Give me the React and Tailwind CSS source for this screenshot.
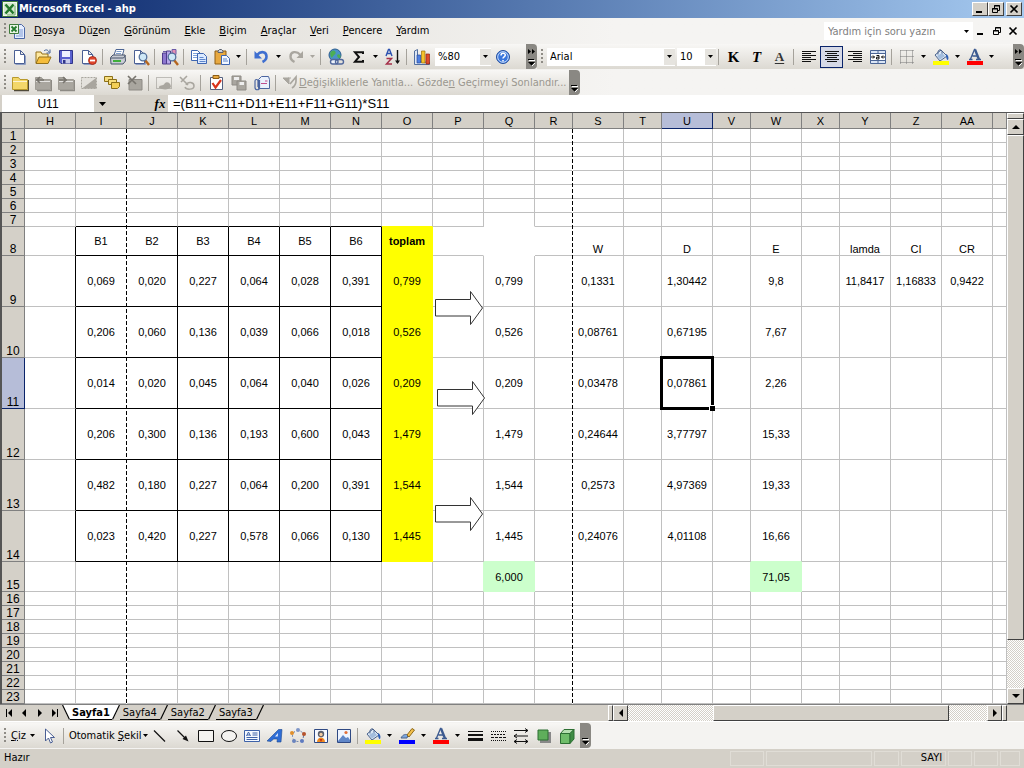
import React, { useState } from "react";
import clsx from "clsx";

const UI_FONT = "font-['DejaVu_Sans_Condensed','Noto_Sans',sans-serif]";
const CELL_FONT = "font-['Liberation_Sans',Arial,sans-serif]";
const RAISED =
  "bg-[#d4d0c8] border border-t-white border-l-white border-r-[#404040] border-b-[#404040]";
const TRACK =
  "bg-[repeating-conic-gradient(#ffffff_0_25%,#d4d0c8_0_50%)] bg-[length:2px_2px]";

/* ---------- icons ---------- */

const Svg = ({ children, w = 18, h = 18 }) => (
  <svg
    width={w}
    height={h}
    viewBox={`0 0 ${w} ${h}`}
    fill="none"
    className="shrink-0"
    aria-hidden="true"
  >
    {children}
  </svg>
);

const Page = ({ x = 3.5, y = 2.5, w = 10, h = 13 }) => (
  <g>
    <path d={`M${x + 1} ${y + h + 1}h${w}V${y + 5}`} stroke="#8f9fc4" />
    <path
      d={`M${x} ${y}h${w - 4}l4 4v${h - 4}h${-w}z M${x + w - 4} ${y}v4h4`}
      fill="#fff"
      stroke="#4a5f94"
    />
  </g>
);

const Glass = ({ x = 11, y = 8 }) => (
  <g>
    <path d={`M${x + 2} ${y + 3}l4 5`} stroke="#b5651d" strokeWidth="2.4" />
    <circle cx={x} cy={y} r="3.8" fill="#cfe8f6" stroke="#54719c" strokeWidth="1.3" />
  </g>
);

const Folder = ({ body = "#f3d76a", line = "#b8992c", shade = "#4f4a38" }) => (
  <g>
    <path d="M3 16.5h14.5V6" stroke={shade} strokeWidth="1.4" />
    <path d="M1.5 3.5h6l1.5 2h7.500v10h-15z" fill={body} stroke={line} />
    <path d="M2 7.5h14" stroke="#fff" strokeOpacity=".7" />
  </g>
);

const Bucket = () => (
  <g>
    <path d="M3 7l6-5 6 6-7 5z" fill="#dbe8f6" stroke="#4a628c" />
    <path d="M6 6.5c-1-5 3-6 4-3v4" stroke="#4a628c" />
    <path d="M14 6c2.5 1 3 4 2 6-1.5 0-2-2.500-2-6z" fill="#2d5fb5" />
    <path d="M5 8l5-3 3 3-5 3.5z" fill="#a3bddd" />
    <rect x="1" y="13" width="16" height="4" fill="#ff0" />
  </g>
);

const G = "#a9a69f";
const K = "#111";

const ICONS = {
  blank: <Page />,
  open: (
    <g>
      <path d="M2 15V4h5l1 2h6v3" fill="#ffe9a0" stroke="#93701a" />
      <path d="M2 15.5L5 9h12l-3 6.5z" fill="#f5bd3c" stroke="#93701a" />
      <path d="M10 3c2-2 4-1 5 1m1-2.5V5h-3.5" stroke="#3f5f96" />
    </g>
  ),
  save: (
    <g>
      <path d="M2.5 2.5h13v13H4l-1.500-1.500z" fill="#5b62cf" stroke="#30358a" />
      <path d="M5 3h8v6H5z" fill="#eef2ff" />
      <path d="M5 11h8v4.5H5z" fill="#c9cdec" />
      <path d="M6 12h2.5v3.5H6z" fill="#30358a" />
    </g>
  ),
  permission: (
    <g>
      <Page x={2.5} />
      <circle cx="12.5" cy="12.5" r="4" fill="#e0452c" stroke="#9d2412" strokeWidth=".8" />
      <path d="M10 12.5h5" stroke="#fff" strokeWidth="1.8" />
    </g>
  ),
  print: (
    <g>
      <path d="M5 7l2-5.5h8L13.5 7" fill="#fff" stroke="#4c6493" />
      <path d="M7.5 3.5h5M7 5.5h5" stroke="#7c9cc9" />
      <path d="M1.5 9.5L4 7h12l.5 6-2.500 3H2z" fill="#c8ccd4" stroke="#47536b" />
      <path d="M2 10h12.5l2-2.500" stroke="#47536b" />
      <path d="M4 13h8" stroke="#3fae3b" strokeWidth="2" />
    </g>
  ),
  preview: (
    <g>
      <Page x={2.5} />
      <Glass x={11} y={9} />
    </g>
  ),
  research: (
    <g>
      <path d="M1.5 5h4v11h-4z" fill="#8d76cf" stroke="#4d3c8c" />
      <path d="M5.5 3h4v13h-4z" fill="#b9a8ea" stroke="#4d3c8c" />
      <path d="M2 3.5h3M11 1.5h4v5h-4z" fill="#e58fb3" stroke="#6b5aa8" />
      <Glass x={11} y={9} />
    </g>
  ),
  copy: (
    <g>
      <path d="M1.5 2.5h6l2.5 2.5v7.5H1.5z" fill="#fff" stroke="#3e66b1" />
      <path d="M3 5.500h5M3 7.500h5M3 9.500h4" stroke="#7ea2dd" />
      <path d="M7.500 5.500h6l3 3v7h-9z" fill="#dceaff" stroke="#3e66b1" />
      <path d="M9.5 9.500h4M9.5 11.500h6M9.5 13.500h6" stroke="#5d86cc" />
    </g>
  ),
  paste: (
    <g>
      <path d="M2 3h11v13H2z" fill="#e8a940" stroke="#8d5d13" />
      <path d="M5 4.500V3l1.500-1.500h2L10 3v1.500z" fill="#ccd2de" stroke="#59606e" />
      <path d="M8.5 7.500h5l3 3v6h-8z" fill="#f2f7ff" stroke="#3e66b1" />
      <path d="M10 11h4M10 13h5" stroke="#5d86cc" />
    </g>
  ),
  undo: (
    <g>
      <path d="M4 7c4-4.500 9.500-3.500 9.500 1.500 0 3-2 4.500-4 5.500" stroke="#3f6fd0" strokeWidth="2.6" />
      <path d="M1.5 3v7.500H9z" fill="#3f6fd0" />
    </g>
  ),
  redo: (
    <g>
      <path d="M13.5 7c-4-4.500-10-3.500-10 1.500 0 3 2 4.500 4 5.500" stroke={G} strokeWidth="2.4" />
      <path d="M16 3v7H9.500z" fill={G} />
    </g>
  ),
  link: (
    <g>
      <circle cx="8" cy="7" r="6" fill="#4a93c9" stroke="#2c5d8f" />
      <path d="M3.500 4c2-2 4-2 5 0s-2 3-3 5-3-2-2-5zM10 7c2-2 4 0 3.500 2s-3 1.500-3.500-2z" fill="#4cae55" />
      <rect x="3.5" y="11.5" width="7.5" height="4.5" rx="2.200" fill="#eef3fb" stroke="#51689c" strokeWidth="1.4" />
      <rect x="8.5" y="11.5" width="8" height="4.5" rx="2.200" stroke="#51689c" strokeWidth="1.4" />
    </g>
  ),
  sum: <path d="M13 6V4.300H5L9 9l-4 4.700h8V12" stroke={K} strokeWidth="2" />,
  sort: (
    <g>
      <path d="M2 8l2.500-6.500h1L8 8M3 5.500h4" stroke="#2b51b0" strokeWidth="1.4" />
      <path d="M2.500 10.500h5L2.500 16h5.500" stroke="#a5304a" strokeWidth="1.5" />
      <path d="M13.5 2v13" stroke={K} strokeWidth="1.4" />
      <path d="M11 12.500h5L13.500 16z" fill={K} />
    </g>
  ),
  chart: (
    <g>
      <path d="M1.500 3l3-1.500v12l12 1v2h-15z" fill="#dfe7f4" stroke="#54709f" />
      <path d="M4 7h3.500v8H4z" fill="#4f7fe0" stroke="#274c9c" strokeWidth=".7" />
      <path d="M8.500 3H12v12H8.500z" fill="#f5c22b" stroke="#99700c" strokeWidth=".7" />
      <path d="M13 6h3.500v10H13z" fill="#df4a2b" stroke="#8c2411" strokeWidth=".7" />
    </g>
  ),
  help: (
    <g>
      <circle cx="9" cy="9" r="6.5" fill="#3a76dc" stroke="#234f9f" />
      <circle cx="9" cy="9" r="5.3" stroke="#c9defa" />
      <path d="M7 7.500c0-3 4.300-2.700 4.300-.4C11.300 9 9 8.700 9 10.500M9 12v1.400" stroke="#fff" strokeWidth="1.5" />
    </g>
  ),
  alignLeft: <path d="M2 3.500h14M2 5.500h9M2 7.500h14M2 9.500h9M2 11.500h14M2 13.500h9" stroke={K} />,
  alignCenter: <path d="M2 3.500h14M4 5.500h10M2 7.500h14M4 9.500h10M2 11.500h14M4 13.500h10" stroke={K} />,
  alignRight: <path d="M2 3.500h14M7 5.500h9M2 7.500h14M7 9.500h9M2 11.500h14M7 13.500h9" stroke={K} />,
  merge: (
    <g>
      <path d="M1.500 2.500h15v13h-15z" fill="#dbe6f6" stroke="#4a6494" />
      <path d="M1.500 5.500h15M1.500 12.500h15M9 2.500v3M9 12.500v3" stroke="#4a6494" />
      <path d="M2 6h14v6H2z" fill="#fff" />
      <path d="M2 9h3.500M16 9h-3.500M4 7.500L5.500 9 4 10.500M14 7.500L12.500 9l1.500 1.500M7.500 7.500h2.500v3.500H7.500V9.200H10" stroke={K} />
    </g>
  ),
  borders: (
    <path
      d="M2.500 2.500h13M2.500 8.500h13M2.500 14.500h13M2.500 2.500v13M8.500 2.500v13M14.500 2.500v13"
      stroke="#777"
      strokeDasharray="1 1"
    />
  ),
  fillYellow: <Bucket />,
  fontColor: (
    <g>
      <path
        d="M3 11.500h3.500M10 11.500h5M4.500 11L8.500 1.500h1M6.500 8h5"
        stroke="#3c5a90"
        strokeWidth="1.3"
      />
      <path d="M9 1.500l4 10" stroke="#3c5a90" strokeWidth="2.4" />
      <rect x="1" y="13" width="16" height="4" fill="#f00" />
    </g>
  ),
  folder: <Folder />,
  folderBack: (
    <g>
      <Folder body={G} line="#a09d96" shade="#8d8a84" />
      <path d="M2 6h8M6 3L3 6l3 3" stroke="#77746e" strokeWidth="1.6" />
    </g>
  ),
  folderNext: (
    <g>
      <Folder body={G} line="#a09d96" shade="#8d8a84" />
      <path d="M2 6h8M6 3l3 3-3 3" stroke="#77746e" strokeWidth="1.6" />
    </g>
  ),
  note: (
    <g>
      <path d="M1.500 3.500h15v11h-15z" fill="#e4e2dd" stroke={G} strokeDasharray="2 1" />
      <path d="M2 14.500L16 4v10.500z" fill={G} />
    </g>
  ),
  notes: (
    <g>
      <path d="M1.500 2.500h8v5h-8z" fill="#f7de7e" stroke="#8c7018" />
      <path d="M5.500 5.500h8v5h-8z" fill="#f7de7e" stroke="#8c7018" />
      <path d="M8.500 8.500h8v4l-2 2h-6z" fill="#f3cf56" stroke="#8c7018" />
    </g>
  ),
  noteDelete: (
    <g>
      <path d="M3 5.500h13v10.500H3z" fill={G} stroke="#8d8a84" />
      <path d="M2 2l8 8M10 2l-8 8" stroke="#77746e" strokeWidth="1.7" />
    </g>
  ),
  shapeGray: (
    <g>
      <path d="M1.500 3.500h15v11h-15z" stroke="#8d8a84" strokeDasharray="1 1" />
      <path d="M4 14c0-4 4-1 6-5 2-2 6 0 6 4-2 3-8 3-12 1z" fill={G} />
    </g>
  ),
  scribble: (
    <g>
      <path d="M2 3l8 8M9 2L3 8" stroke={G} strokeWidth="1.6" />
      <path d="M8 11c2-4 8-3 8 1s-8 4-9 1" stroke={G} strokeWidth="1.5" />
    </g>
  ),
  task: (
    <g>
      <path d="M3.500 3.500h12v12h-12z" fill="#fff" stroke="#55617f" />
      <path d="M6 1.500h6v3H6z" fill="#e8a940" stroke="#8d5d13" />
      <path d="M5.500 9l3 4.500L14 6" stroke="#d8331c" strokeWidth="2.2" />
    </g>
  ),
  saveGray: (
    <g>
      <path d="M2 2h9v9H2z" fill={G} stroke="#8d8a84" />
      <path d="M7 7h9v9H7z" fill={G} stroke="#8d8a84" />
      <path d="M4 3h5v3H4zM9.500 8h4.500v3H9.500z" fill="#eee" />
    </g>
  ),
  mail: (
    <g>
      <path d="M5.500 5.500l3-3h7l1 3v9h-11z" fill="#eaf1fd" stroke="#4b65a0" />
      <path d="M8 9.500h6M12 7h2.500" stroke="#c14d8c" />
      <path d="M6.500 6v7.500c0 3-4.500 3-4.500 0V7c0-2 3-2 3 0v6" stroke="#4b65a0" strokeWidth="1.2" />
    </g>
  ),
  reply: (
    <g>
      <path d="M2 4l6 6V4zM7 4h3" fill={G} stroke={G} />
      <path d="M9 10l6-7v4c0 3-1 5-4 7" stroke={G} strokeWidth="1.7" />
    </g>
  ),
  cursor: <path d="M5.500 2v12l3-3 2 5 2-1-2-4.500h4z" fill="#fff" stroke="#4a5f94" />,
  line: <path d="M3 3.500l11 11" stroke={K} strokeWidth="1.2" />,
  arrowLine: (
    <g>
      <path d="M3.500 3.500l9 9" stroke={K} strokeWidth="1.2" />
      <path d="M14.500 14.500l-6-2.500 3.500-3.500z" fill={K} />
    </g>
  ),
  rect: <path d="M1.500 3.500h15v11h-15z" stroke={K} fill="#f4f3f0" />,
  ellipse: <ellipse cx="9" cy="9" rx="7.5" ry="5.5" stroke={K} fill="#f4f3f0" />,
  textbox: (
    <g>
      <path d="M1.500 3.500h15v11h-15z" fill="#f5f9ff" stroke="#3e62a8" />
      <path d="M3.500 9l2-4 2 4M4 8h3M9.500 6h5M9.500 8h5M3.500 10.500h11M3.500 12.500h11" stroke="#3e62a8" />
    </g>
  ),
  wordArt: (
    <g>
      <path d="M1 14L12.500 2.500H16L15 15h-4l.3-3H7.500L5 14.500z" fill="#2f6dd5" stroke="#1c488f" strokeWidth=".6" />
      <path d="M9 9.500l3-3.500-.3 3.500z" fill="#e8f1ff" />
    </g>
  ),
  diagram: (
    <g>
      <circle cx="9" cy="9" r="5.5" stroke="#5c73a3" strokeDasharray="2 2" />
      <circle cx="3" cy="6" r="2" fill="#e08f2c" />
      <circle cx="9" cy="3" r="2" fill="#7f96c8" />
      <circle cx="15" cy="7" r="2" fill="#b5532d" />
      <circle cx="13" cy="14" r="2" fill="#5f7bc0" />
      <circle cx="5" cy="14" r="2" fill="#6a83bd" />
    </g>
  ),
  clipArt: (
    <g>
      <path d="M2.500 2.500h13v13h-13z" fill="#f6f8ff" stroke="#2f4983" />
      <path d="M5 15c0-6 8-6 8 0z" fill="#ef8a1f" />
      <circle cx="9" cy="7" r="3.2" fill="#5a5f6d" />
      <circle cx="9" cy="7.5" r="1.7" fill="#f2cba2" />
      <path d="M7.500 12h3L9 15z" fill="#c22e17" />
    </g>
  ),
  picture: (
    <g>
      <path d="M2.500 2.500h13v13h-13z" fill="#eef4ff" stroke="#2f4983" />
      <path d="M3 14l5-6 3 3 2-1 2 3v2H3z" fill="#5f86c8" />
      <circle cx="11" cy="5.5" r="1.600" fill="#e2703a" />
    </g>
  ),
  lineColor: (
    <g>
      <path d="M3 11c2-4 5-4 7-3l-1 3z" fill="#7da7de" stroke="#4a628c" />
      <path d="M9 8l5-6.500L16.500 3 11 10z" fill="#f3c04c" stroke="#8f6a1a" />
      <rect x="1" y="13" width="16" height="4" fill="#00f" />
    </g>
  ),
  lineStyle: (
    <g stroke={K}>
      <path d="M2 4.500h15" />
      <path d="M2 8h15" strokeWidth="2" />
      <path d="M2 12.500h15" strokeWidth="3" />
    </g>
  ),
  dashStyle: (
    <g stroke={K}>
      <path d="M2 4.500h15" strokeDasharray="1 1" />
      <path d="M2 7.500h15" strokeDasharray="2 1" />
      <path d="M2 10.500h15" strokeDasharray="3 1" />
      <path d="M2 13.500h15" strokeDasharray="1 1" />
    </g>
  ),
  arrowStyle: (
    <g stroke={K}>
      <path d="M2 3.500h14M2 9h14M2 14.500h14" strokeWidth="1.2" />
      <path d="M13 1.500l3 2-3 2M5 7L2 9l3 2M5 12.500l-3 2 3 2M13 12.500l3 2-3 2" />
    </g>
  ),
  shadow: (
    <g>
      <path d="M5 5h11v11H5z" fill="#888" />
      <path d="M3 3h10v10H3z" fill="#5fae5b" stroke="#2d6f33" />
    </g>
  ),
  cube: (
    <g stroke="#2d6f33">
      <path d="M2.500 6.500H12v10H2.500z" fill="#6fbd6a" />
      <path d="M2.500 6.500l3.500-4h10l-4 4z" fill="#b5dfb0" />
      <path d="M12 6.500l4-4V12l-4 4.500z" fill="#3f8c44" />
    </g>
  ),
};

const ExcelMark = () => (
  <Svg w={16} h={16}>
    <path d="M.5.5h15v15H.5z" fill="#f3f8ee" stroke="#3f7b3a" />
    <path d="M2 2h12v12H2z" fill="#d5e8cf" />
    <path d="M3.500 3.500l8 9M11.500 3.500l-8 9" stroke="#237a2c" strokeWidth="2.6" />
    <path d="M13 5v9H5" stroke="#79ad73" />
  </Svg>
);

const WorkbookMark = () => (
  <Svg>
    <path d="M6.500 2.500h7l3 3v11h-10z" fill="#e6eeff" stroke="#4a66a5" />
    <path d="M11 8h4M11 10h4M11 12h4M8 14h7" stroke="#7f9bd3" />
    <path d="M1.500 2.500h9v9h-9z" fill="#eaf5e6" stroke="#3f7b3a" />
    <path d="M3.500 4.500l5 5M8.500 4.500l-5 5" stroke="#237a2c" strokeWidth="1.8" />
  </Svg>
);

const WindowGlyph = ({ kind }) => (
  <Svg w={10} h={10}>
    {kind === "min" && <path d="M1 8h6" stroke="#000" strokeWidth="2" />}
    {kind === "restore" && (
      <path d="M3.500 4V1.500h5v5H7M3 2h6M1.500 4.500h5v4h-5zM1 5h6" stroke="#000" />
    )}
    {kind === "close" && <path d="M1.500 1.500l7 7M8.500 1.500l-7 7" stroke="#000" strokeWidth="1.7" />}
  </Svg>
);

const Caret = ({ color = "#000" }) => (
  <Svg w={5} h={3}>
    <path d="M0 0h5L2.500 3z" fill={color} />
  </Svg>
);

const Triangle = ({ d }) => (
  <Svg w={8} h={8}>
    <path d={d} fill="#000" />
  </Svg>
);

/* ---------- toolbar parts ---------- */

const Grip = () => (
  <span className="ml-1 w-1 h-4 shrink-0 bg-[radial-gradient(circle_at_1px_1px,#8f8c86_1px,transparent_1px)] bg-[length:4px_4px]" />
);

const Sep = () => <span className="w-px h-4 ml-[2px] mr-[3px] shrink-0 bg-[#a5a29b]" />;

const Tool = ({ icon, label, active, children }) => (
  <button
    aria-label={label}
    className={clsx(
      "w-[23px] h-[22px] shrink-0 flex items-center justify-center",
      active && "border border-[#0a246a] bg-[#d6d9e6]"
    )}
  >
    {icon ? <Svg>{ICONS[icon]}</Svg> : children}
  </button>
);

const Drop = ({ label, disabled }) => (
  <button
    aria-label={label}
    disabled={disabled}
    className="w-[11px] h-[22px] shrink-0 flex items-center justify-center"
  >
    <Caret color={disabled ? "#a9a69f" : "#000"} />
  </button>
);

const Combo = ({ label, value, className }) => (
  <label className={clsx("flex items-center h-[18px] bg-white shrink-0", className)}>
    <select
      aria-label={label}
      defaultValue={value}
      className="appearance-none flex-1 min-w-0 pl-[3px] bg-white outline-none"
    >
      <option>{value}</option>
    </select>
    <span className="w-[11px] h-4 flex items-center justify-center bg-[#e6e4df]">
      <Caret />
    </span>
  </label>
);

const More = ({ arrows }) => (
  <button
    aria-label="Araç çubuğu seçenekleri"
    className="w-[11px] self-stretch shrink-0 rounded-r-sm bg-[#8a8883] flex flex-col items-center justify-end gap-1 pb-[3px]"
  >
    {arrows && (
      <Svg w={7} h={5}>
        <path d="M0 0l3 2.500L0 5zM4 0l3 2.500L4 5z" fill="#000" />
      </Svg>
    )}
    <Svg w={7} h={8}>
      <path d="M0 1.500h6" stroke="#000" />
      <path d="M1 2.500h6" stroke="#fff" />
      <path d="M0 4h7L3.500 7.500z" fill="#000" />
      <path d="M4 8l3-3" stroke="#fff" />
    </Svg>
  </button>
);

const BAR = "bg-gradient-to-b from-[#f8f7f5] to-[#dcd9d2]";

/* middle part is the underlined access key */
const MENUS = [
  ["", "D", "osya"],
  ["Dü", "z", "en"],
  ["", "G", "örünüm"],
  ["", "E", "kle"],
  ["", "B", "içim"],
  ["", "A", "raçlar"],
  ["", "V", "eri"],
  ["", "P", "encere"],
  ["", "Y", "ardım"],
];

const AccessText = ({ parts: [before, key, after] }) => (
  <span>
    {before}
    <span className="underline underline-offset-1">{key}</span>
    {after}
  </span>
);

const TitleBar = () => (
  <header className="h-[18px] flex items-center px-[2px] gap-px bg-gradient-to-r from-[#0a246a] to-[#a6caf0] text-white">
    <ExcelMark />
    <h1 className="flex-1 text-[11px] font-bold whitespace-nowrap">Microsoft Excel - ahp</h1>
    <div className="flex">
      {["min", "restore", "close"].map((kind) => (
        <button
          key={kind}
          aria-label={kind}
          className={clsx("w-4 h-[14px] flex items-center justify-center", RAISED, kind === "close" && "ml-[2px]")}
        >
          <WindowGlyph kind={kind} />
        </button>
      ))}
    </div>
  </header>
);

const MenuBar = () => (
  <nav className="h-[26px] flex items-center">
    <Grip />
    <WorkbookMark />
    <div className="flex pl-px">
      {MENUS.map((parts) => (
        <button key={parts.join("")} className="px-[7px]">
          <AccessText parts={parts} />
        </button>
      ))}
    </div>
    <span className="flex-1" />
    <input
      aria-label="Yardım"
      placeholder="Yardım için soru yazın"
      className="w-[136px] h-[18px] pl-1 bg-white placeholder:text-[#808080] outline-none"
    />
    <span className="w-[13px] h-[18px] flex items-center justify-center bg-white">
      <Caret />
    </span>
    {["min", "restore", "close"].map((kind) => (
      <button key={kind} aria-label={`Kitap ${kind}`} className="w-4 flex justify-center">
        <WindowGlyph kind={kind} />
      </button>
    ))}
    <span className="w-[3px]" />
  </nav>
);

const StandardBar = () => (
  <div className="h-[25px] flex">
    <div className={clsx("flex items-center rounded-r-sm", BAR)}>
      <Grip />
      <Tool icon="blank" label="Yeni" />
      <Tool icon="open" label="Aç" />
      <Tool icon="save" label="Kaydet" />
      <Tool icon="permission" label="İzin" />
      <Sep />
      <Tool icon="print" label="Yazdır" />
      <Tool icon="preview" label="Baskı Önizleme" />
      <Sep />
      <Tool icon="research" label="Araştır" />
      <Sep />
      <Tool icon="copy" label="Kopyala" />
      <Tool icon="paste" label="Yapıştır" />
      <Drop label="Yapıştırma seçenekleri" />
      <Sep />
      <Tool icon="undo" label="Geri Al" />
      <Drop label="Geri alma listesi" />
      <Tool icon="redo" label="Yinele" />
      <Drop label="Yineleme listesi" disabled />
      <Sep />
      <Tool icon="link" label="Köprü Ekle" />
      <Tool icon="sum" label="Otomatik Toplam" />
      <Drop label="İşlevler" />
      <Tool icon="sort" label="Artan Sıralama" />
      <Sep />
      <Tool icon="chart" label="Grafik Sihirbazı" />
      <Combo label="Yakınlaştır" value="%80" className="w-14 ml-[2px]" />
      <Tool icon="help" label="Yardım" />
      <span className="w-3" />
      <More arrows />
    </div>
    <div className={clsx("flex-1 flex items-center", BAR)}>
      <Grip />
      <Combo label="Yazı tipi" value="Arial" className="w-32 ml-[2px]" />
      <Combo label="Boyut" value="10" className="w-[39px] ml-[2px]" />
      <Sep />
      <div className="flex font-['Liberation_Serif',serif] text-[15px] font-bold">
        <Tool label="Kalın">K</Tool>
        <Tool label="İtalik">
          <span className="italic">T</span>
        </Tool>
        <Tool label="Altı Çizili">
          <span className="text-[13px] underline underline-offset-2 text-[#333]">A</span>
        </Tool>
      </div>
      <Sep />
      <Tool icon="alignLeft" label="Sola Hizala" />
      <Tool icon="alignCenter" label="Ortala" active />
      <Tool icon="alignRight" label="Sağa Hizala" />
      <Tool icon="merge" label="Birleştir ve Ortala" />
      <Sep />
      <Tool icon="borders" label="Kenarlıklar" />
      <Drop label="Kenarlık türü" />
      <Tool icon="fillYellow" label="Dolgu Rengi" />
      <Drop label="Dolgu renkleri" />
      <Tool icon="fontColor" label="Yazı Tipi Rengi" />
      <Drop label="Yazı renkleri" />
      <span className="flex-1" />
      <More arrows />
    </div>
  </div>
);

const ReviewBar = () => (
  <div className="h-[26px] flex pt-px">
    <div className={clsx("flex items-center rounded-r-sm", BAR)}>
      <Grip />
      <Tool icon="folder" label="Açıklama" />
      <Tool icon="folderBack" label="Önceki Açıklama" />
      <Tool icon="folderNext" label="Sonraki Açıklama" />
      <Tool icon="note" label="Açıklamayı Göster" />
      <Tool icon="notes" label="Tüm Açıklamalar" />
      <Tool icon="noteDelete" label="Açıklamayı Sil" />
      <Sep />
      <Tool icon="shapeGray" label="Mürekkep" />
      <Tool icon="scribble" label="Mürekkebi Sil" />
      <Sep />
      <Tool icon="task" label="Görev Oluştur" />
      <Tool icon="saveGray" label="Dosyayı Güncelleştir" />
      <Tool icon="mail" label="Posta Alıcısı" />
      <Sep />
      <button disabled className="flex items-center pl-[2px] text-[#9a978f]">
        <Svg>{ICONS.reply}</Svg>
        <AccessText parts={["", "D", "eğişikliklerle Yanıtla..."]} />
      </button>
      <button disabled className="pl-1 pr-[2px] text-[#9a978f]">
        <AccessText parts={["Gözde", "n", " Geçirmeyi Sonlandır..."]} />
      </button>
      <More />
    </div>
  </div>
);

const FormulaBar = ({ name, formula }) => (
  <div className="h-[17px] flex items-stretch bg-[#d4d0c8] pl-[2px] text-black">
    <input
      aria-label="Ad Kutusu"
      defaultValue={name}
      className={clsx("w-[92px] text-center text-[12px] bg-white outline-none", CELL_FONT)}
    />
    <button aria-label="Adlar" className="w-4 flex items-center justify-center">
      <Svg w={7} h={4}>
        <path d="M0 0h7L3.500 4z" fill="#000" />
      </Svg>
    </button>
    <button
      aria-label="İşlev Ekle"
      className="ml-[42px] w-4 text-[13px] leading-4 italic font-bold font-['Liberation_Serif',serif]"
    >
      fx
    </button>
    <input
      aria-label="Formül"
      defaultValue={formula}
      className={clsx("flex-1 min-w-0 pl-[5px] text-[13px] bg-white outline-none", CELL_FONT)}
    />
  </div>
);

/* ---------- sheet ---------- */

const COLUMNS = [
  ["H", 51], ["I", 51], ["J", 51], ["K", 51], ["L", 51], ["M", 51], ["N", 51],
  ["O", 51], ["P", 51], ["Q", 51], ["R", 38], ["S", 51], ["T", 38], ["U", 51],
  ["V", 38], ["W", 51], ["X", 38], ["Y", 51], ["Z", 51], ["AA", 51], ["", null],
];

const ROWS = Array.from({ length: 23 }, (_, i) => i + 1);

const row = (b, total, w, d, e, rest = {}) => ({
  I: b[0], J: b[1], K: b[2], L: b[3], M: b[4], N: b[5],
  O: total, Q: total, S: w, U: d, W: e, ...rest,
});

const CELLS = {
  8: {
    I: "B1", J: "B2", K: "B3", L: "B4", M: "B5", N: "B6", O: "toplam",
    S: "W", U: "D", W: "E", Y: "lamda", Z: "CI", AA: "CR",
  },
  9: row(["0,069", "0,020", "0,227", "0,064", "0,028", "0,391"], "0,799", "0,1331", "1,30442", "9,8", {
    Y: "11,8417", Z: "1,16833", AA: "0,9422",
  }),
  10: row(["0,206", "0,060", "0,136", "0,039", "0,066", "0,018"], "0,526", "0,08761", "0,67195", "7,67"),
  11: row(["0,014", "0,020", "0,045", "0,064", "0,040", "0,026"], "0,209", "0,03478", "0,07861", "2,26"),
  12: row(["0,206", "0,300", "0,136", "0,193", "0,600", "0,043"], "1,479", "0,24644", "3,77797", "15,33"),
  13: row(["0,482", "0,180", "0,227", "0,064", "0,200", "0,391"], "1,544", "0,2573", "4,97369", "19,33"),
  14: row(["0,023", "0,420", "0,227", "0,578", "0,066", "0,130"], "1,445", "0,24076", "4,01108", "16,66"),
  15: { Q: "6,000", W: "71,05" },
};

const rowHeight = (n) => {
  if (n === 8) return "h-[29px]";
  if (n > 8 && n < 15) return "h-[51px]";
  if (n === 15) return "h-[30px]";
  return "h-[14px]";
};

const MATRIX = ["I", "J", "K", "L", "M", "N"];

const cellStyle = (col, n) => {
  const inRows = n >= 8 && n <= 14;
  let right = "border-r-[#c0c0c0]";
  let bottom = "border-b-[#c0c0c0]";
  let fill = "";

  if (inRows && (col === "H" || MATRIX.includes(col))) right = "border-r-black";
  if (n >= 7 && n <= 14 && MATRIX.includes(col)) bottom = "border-b-black";
  if (inRows && col === "O") {
    fill = "bg-[#ffff00]";
    right = "border-r-[#ffff00]";
    bottom = "border-b-[#ffff00]";
  }
  if (n === 7 && col === "O") bottom = "border-b-[#ffff00]";
  if (n === 8 && (col === "P" || col === "Q")) right = "border-r-white";
  if ((n === 7 || n === 8) && col === "Q") bottom = "border-b-white";
  if (n === 15 && (col === "Q" || col === "W")) {
    fill = "bg-[#ccffcc]";
    right = "border-r-[#ccffcc]";
    bottom = "border-b-[#ccffcc]";
  }
  if (n === 15 && (col === "P" || col === "V")) right = "border-r-[#ccffcc]";
  if (n === 14 && (col === "Q" || col === "W")) bottom = "border-b-[#ccffcc]";

  const low = n === 8 && !MATRIX.includes(col) && col !== "O";
  return clsx(right, bottom, fill, low ? "align-bottom" : "align-middle");
};

const BlockArrow = ({ className }) => (
  <svg width="48" height="34" className={clsx("absolute z-10", className)} aria-hidden="true">
    <path d="M.5 8.500h35v-8L47.500 17l-12 16.500v-8.500H.5z" fill="#fff" stroke="#333" />
  </svg>
);

const PageBreak = ({ className }) => (
  <span
    className={clsx(
      "absolute top-4 bottom-0 w-px bg-[repeating-linear-gradient(to_bottom,#000_0_4px,#fff_4px_6px)]",
      className
    )}
  />
);

const Selection = () => (
  <span className="absolute -top-[2px] -left-[2px] -right-[2px] -bottom-[2px] border-[3px] border-black">
    <span className="absolute -right-1 -bottom-1 w-[6px] h-[6px] bg-black border-t border-l border-white" />
  </span>
);

const Grid = ({ selected }) => (
  <div className={clsx("relative flex-1 min-w-0 overflow-hidden bg-white", CELL_FONT)}>
    <table className="w-full table-fixed border-separate border-spacing-0 text-[11px] leading-[12px] text-black">
      <colgroup>
        <col className="w-[23px]" />
        {COLUMNS.map(([name, width]) => (
          <col key={name || "rest"} className={width === 51 ? "w-[51px]" : width === 38 ? "w-[38px]" : ""} />
        ))}
      </colgroup>
      <thead>
        <tr className="h-4">
          <th className="p-0 bg-[#d4d0c8] border-r border-b border-[#808080]" />
          {COLUMNS.map(([name]) => (
            <th
              key={name || "rest"}
              className={clsx(
                "p-0 font-normal border-r border-b",
                name === selected.col ? "bg-[#b6bdd8] border-[#0a246a]" : "bg-[#d4d0c8] border-[#808080]"
              )}
            >
              {name}
            </th>
          ))}
        </tr>
      </thead>
      <tbody>
        {ROWS.map((n) => (
          <tr key={n} className={rowHeight(n)}>
            <th
              className={clsx(
                "p-0 align-bottom font-normal text-[12px] border-r border-b",
                n === selected.row ? "bg-[#b6bdd8] border-[#0a246a]" : "bg-[#d4d0c8] border-[#808080]"
              )}
            >
              {n}
            </th>
            {COLUMNS.map(([col]) => {
              const isSelected = n === selected.row && col === selected.col;
              return (
                <td
                  key={col || "rest"}
                  className={clsx(
                    "p-0 text-center border-r border-b whitespace-nowrap",
                    cellStyle(col, n),
                    isSelected && "relative",
                    CELLS[n]?.[col] === "toplam" && "font-bold"
                  )}
                >
                  {CELLS[n]?.[col]}
                  {isSelected && <Selection />}
                </td>
              );
            })}
          </tr>
        ))}
      </tbody>
    </table>
    <PageBreak className="left-[124px]" />
    <PageBreak className="left-[570px]" />
    <BlockArrow className="left-[433px] top-[178px]" />
    <BlockArrow className="left-[435px] top-[268px]" />
    <BlockArrow className="left-[433px] top-[384px]" />
  </div>
);

const VerticalScroll = () => (
  <div className={clsx("w-[17px] shrink-0 flex flex-col", TRACK)}>
    <span className={clsx("h-[6px]", RAISED)} />
    <button aria-label="Yukarı" className={clsx("h-4 flex items-center justify-center", RAISED)}>
      <Triangle d="M0 6h8L4 2z" />
    </button>
    <span className={clsx("grow-[506]", RAISED)} />
    <span className="grow-[48]" />
    <button aria-label="Aşağı" className={clsx("h-4 flex items-center justify-center", RAISED)}>
      <Triangle d="M0 2h8L4 6z" />
    </button>
  </div>
);

const SHEETS = ["Sayfa1", "Sayfa4", "Sayfa2", "Sayfa3"];

const NAV = [
  ["İlk sayfa", "M0 0h1v8H0zM6 0v8L2 4z"],
  ["Önceki sayfa", "M5 0v8L1 4z"],
  ["Sonraki sayfa", "M2 0v8l4-4z"],
  ["Son sayfa", "M1 0v8l4-4zM6 0h1v8H6z"],
];

const SheetTabs = () => {
  const [current, setCurrent] = useState("Sayfa1");
  return (
    <div className="h-[17px] flex items-stretch bg-[#d4d0c8] border-t border-[#808080] pl-[2px]">
      {NAV.map(([label, d]) => (
        <button key={label} aria-label={label} className="w-[15px] flex items-center justify-center">
          <Triangle d={d} />
        </button>
      ))}
      <Svg w={8} h={16}>
        <path d="M0 0h8v15H7z" fill="#fff" />
        <path d="M.5 0l7 14.500" stroke="#000" strokeWidth="1.2" />
      </Svg>
      {SHEETS.map((name) => {
        const active = name === current;
        return (
          <React.Fragment key={name}>
            <button
              onClick={() => setCurrent(name)}
              className={clsx(
                "h-[15px] leading-[15px] border-b border-black",
                active ? "px-[2px] bg-white font-bold" : "px-[3px] bg-[#d4d0c8]"
              )}
            >
              {name}
            </button>
            <Svg w={8} h={16}>
              {active && <path d="M0 0h8L1 15H0z" fill="#fff" />}
              <path d="M7.500 0L.5 14.500" stroke="#000" strokeWidth="1.2" />
            </Svg>
          </React.Fragment>
        );
      })}
      <span className="flex-1" />
      <div className="w-[39%] flex items-stretch">
        <span className={clsx("w-[5px]", RAISED)} />
        <button aria-label="Sola" className={clsx("w-[15px] flex items-center justify-center", RAISED)}>
          <Triangle d="M6 0v8L2 4z" />
        </button>
        <span className={clsx("grow-[85]", TRACK)} />
        <span className={clsx("grow-[237]", RAISED)} />
        <span className={clsx("grow-[38]", TRACK)} />
        <button aria-label="Sağa" className={clsx("w-[15px] flex items-center justify-center", RAISED)}>
          <Triangle d="M2 0v8l4-4z" />
        </button>
        <span className={clsx("w-[5px]", RAISED)} />
      </div>
      <span className="w-[17px]" />
    </div>
  );
};

const DrawingBar = () => (
  <div className="h-7 flex py-px border-t border-white bg-[#f4f3f1]">
    <div className={clsx("flex items-center rounded-r-sm", BAR)}>
      <Grip />
      <button className="flex items-center gap-1 px-[3px]">
        <AccessText parts={["", "Ç", "iz"]} />
        <Caret />
      </button>
      <Tool icon="cursor" label="Nesneleri Seç" />
      <Sep />
      <button className="flex items-center gap-[2px] pl-[2px]">
        <AccessText parts={["Otomatik ", "Ş", "ekil"]} />
        <Caret />
      </button>
      <Tool icon="line" label="Çizgi" />
      <Tool icon="arrowLine" label="Ok" />
      <Tool icon="rect" label="Dikdörtgen" />
      <Tool icon="ellipse" label="Oval" />
      <Tool icon="textbox" label="Metin Kutusu" />
      <Tool icon="wordArt" label="WordArt Ekle" />
      <Tool icon="diagram" label="Diyagram Ekle" />
      <Tool icon="clipArt" label="Küçük Resim Ekle" />
      <Tool icon="picture" label="Resim Ekle" />
      <Sep />
      <Tool icon="fillYellow" label="Dolgu" />
      <Drop label="Dolgu seçenekleri" />
      <Tool icon="lineColor" label="Çizgi Rengi" />
      <Drop label="Çizgi renkleri" />
      <Tool icon="fontColor" label="Yazı Rengi" />
      <Drop label="Yazı rengi seçenekleri" />
      <Tool icon="lineStyle" label="Çizgi Stili" />
      <Tool icon="dashStyle" label="Kesikli Çizgi Stili" />
      <Tool icon="arrowStyle" label="Ok Stili" />
      <Tool icon="shadow" label="Gölge Stili" />
      <Tool icon="cube" label="3-B Stili" />
      <span className="w-[2px]" />
      <More />
    </div>
  </div>
);

const StatusPane = ({ className, children }) => (
  <span
    className={clsx(
      "h-[15px] mr-[2px] flex items-center justify-center border border-[#e0ddd6]",
      className
    )}
  >
    {children}
  </span>
);

const StatusBar = () => (
  <footer className="h-[18px] flex items-center pl-1 pr-[2px] bg-[#d4d0c8]">
    <span className="flex-1">Hazır</span>
    <StatusPane className="w-[34px]" />
    <StatusPane className="w-[106px]" />
    <StatusPane className="w-[25px]" />
    <StatusPane className="w-[45px] pl-4">SAYI</StatusPane>
    <StatusPane className="w-6" />
    <StatusPane className="w-6" />
    <StatusPane className="w-5" />
  </footer>
);

export default function App() {
  const selected = { col: "U", row: 11 };

  return (
    <div className={clsx("min-h-screen flex flex-col text-[11px] leading-[14px] text-black bg-[#d4d0c8]", UI_FONT)}>
      <TitleBar />
      <div className="bg-gradient-to-r from-[#dcd9d2] to-[#f5f4f2] to-60%">
        <MenuBar />
        <StandardBar />
        <ReviewBar />
      </div>
      <FormulaBar name="U11" formula="=(B11+C11+D11+E11+F11+G11)*S11" />
      <main className="flex border-t border-l-2 border-[#555]">
        <Grid selected={selected} />
        <VerticalScroll />
      </main>
      <SheetTabs />
      <DrawingBar />
      <StatusBar />
    </div>
  );
}
